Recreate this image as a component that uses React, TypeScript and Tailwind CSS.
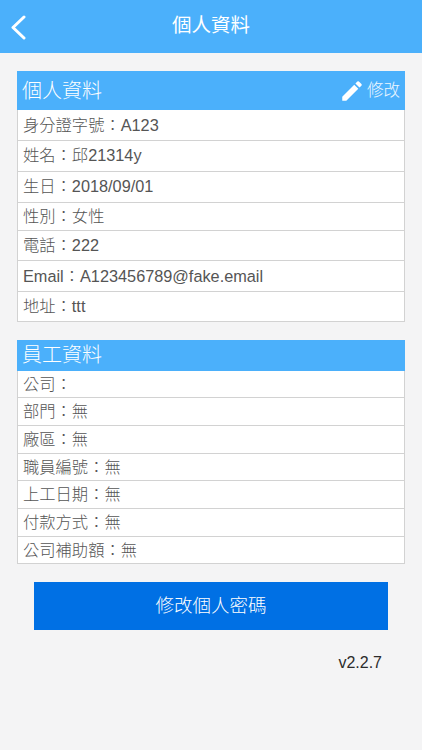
const font = { fontFamily: '"Liberation Sans", "Noto Sans CJK TC", sans-serif' };

const personal = [
  { text: "身分證字號：A123", h: "h-[30.5px]" },
  { text: "姓名：邱21314y", h: "h-[31px]" },
  { text: "生日：2018/09/01", h: "h-[31px]" },
  { text: "性別：女性", h: "h-[28px]" },
  { text: "電話：222", h: "h-[30.5px]" },
  { text: "Email：A123456789@fake.email", h: "h-[30.5px]" },
  { text: "地址：ttt", h: "h-[30px]" },
];

const staff = ["公司：", "部門：無", "廠區：無", "職員編號：無", "上工日期：無", "付款方式：無", "公司補助額：無"];

function Row({ text, h }: { text: string; h: string }) {
  return (
    <div className={`${h} flex items-center border-b-[1.5px] border-[#d2d2d2] px-[5px] text-[16.3px] font-light leading-none text-[#555555]`}>
      {text}
    </div>
  );
}

export default function App() {
  return (
    <div lang="zh-TW" className="flex h-[750px] w-[422px] flex-col overflow-hidden bg-[#f4f4f5]" style={font}>
      <header className="relative flex h-[53px] shrink-0 items-center justify-center bg-[#4bb0fb] pb-[1px] text-[19.5px] text-white">
        <svg className="absolute left-[10px] top-[15px]" width="16" height="25" viewBox="0 0 16 25" fill="none">
          <path d="M14 2 L3 12.5 L14 23" stroke="white" strokeWidth="3" strokeLinecap="round" strokeLinejoin="round" />
        </svg>
        個人資料
      </header>

      <main className="flex flex-col px-[17px] pt-[18px]">
        <section className="bg-white">
          <div className="flex h-[39px] items-center justify-between bg-[#4bb0fb] px-[5px] text-white">
            <span className="text-[20px] font-light">個人資料</span>
            <span className="flex items-center gap-[2px] text-[16.5px] font-light text-[#eef7ff]">
              <svg width="26" height="26" viewBox="0 0 24 24" fill="white">
                <path d="M3 17.25V21h3.75L17.81 9.94l-3.75-3.75L3 17.25zM20.71 7.04a1 1 0 0 0 0-1.41l-2.34-2.34a1 1 0 0 0-1.41 0l-1.83 1.83 3.75 3.75 1.83-1.83z" />
              </svg>
              修改
            </span>
          </div>
          <div className="border-x-[1.5px] border-[#d2d2d2]">
            {personal.map((row) => (
              <Row key={row.text} text={row.text} h={row.h} />
            ))}
          </div>
        </section>

        <section className="mt-[18px] bg-white">
          <div className="flex h-[31px] items-center bg-[#4bb0fb] px-[5px] text-[20px] font-light text-white">員工資料</div>
          <div className="border-x-[1.5px] border-[#d2d2d2]">
            {staff.map((text) => (
              <Row key={text} text={text} h="h-[27.7px]" />
            ))}
          </div>
        </section>

        <button className="mx-[17px] mt-[18px] flex h-[47.5px] items-center justify-center bg-[#0070e4] text-[18.5px] font-light text-white">
          修改個人密碼
        </button>

        <p className="mr-[17px] mt-[24px] pr-[6px] text-right text-[16px] leading-[18px] text-[#2b2b2b]">v2.2.7</p>
      </main>
    </div>
  );
}
